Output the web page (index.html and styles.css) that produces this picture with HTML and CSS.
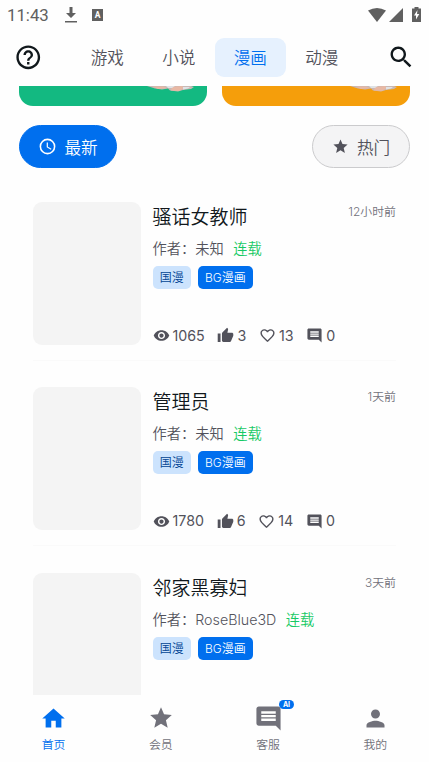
FILE: index.html
```html
<!DOCTYPE html>
<html lang="zh-CN">
<head>
<meta charset="utf-8">
<title>漫画</title>
<link rel="stylesheet" href="styles.css">
</head>
<body>
<svg class="defs" width="0" height="0">
  <symbol id="eye" viewBox="0 0 24 24"><path d="M12 4.5C7 4.5 2.73 7.61 1 12c1.73 4.39 6 7.5 11 7.5s9.270-3.110 11-7.500c-1.730-4.390-6-7.500-11-7.500zM12 17c-2.760 0-5-2.240-5-5s2.240-5 5-5 5 2.240 5 5-2.240 5-5 5zm0-8c-1.660 0-3 1.340-3 3s1.340 3 3 3 3-1.340 3-3-1.340-3-3-3z"/></symbol>
  <symbol id="thumb" viewBox="0 0 24 24"><path d="M1 21h4V9H1v12zm22-11c0-1.100-.9-2-2-2h-6.310l.95-4.570.03-.32c0-.41-.17-.79-.44-1.060L14.170 1 7.590 7.590C7.220 7.950 7 8.450 7 9v10c0 1.100.9 2 2 2h9c.83 0 1.540-.5 1.840-1.220l3.020-7.050c.09-.23.14-.47.14-.73v-2z"/></symbol>
  <symbol id="heart" viewBox="0 0 24 24"><path d="M16.500 3c-1.740 0-3.410.81-4.500 2.090C10.910 3.810 9.240 3 7.500 3 4.420 3 2 5.420 2 8.500c0 3.780 3.400 6.860 8.550 11.540L12 21.350l1.450-1.320C18.600 15.360 22 12.280 22 8.500 22 5.420 19.580 3 16.500 3zm-4.400 15.550l-.1.100-.1-.1C7.140 14.240 4 11.390 4 8.500 4 6.500 5.500 5 7.500 5c1.540 0 3.040.99 3.570 2.360h1.870C13.460 5.990 14.960 5 16.500 5c2 0 3.500 1.500 3.500 3.500 0 2.890-3.140 5.740-7.900 10.050z"/></symbol>
  <symbol id="comment" viewBox="0 0 24 24"><path d="M21.990 4c0-1.100-.89-2-1.990-2H4c-1.100 0-2 .9-2 2v12c0 1.100.9 2 2 2h14l4 4-.01-18zM18 14H6v-2h12v2zm0-3H6V9h12v2zm0-3H6V6h12v2z"/></symbol>
  <symbol id="star" viewBox="0 0 24 24"><path d="M12 17.270L18.180 21l-1.640-7.030L22 9.240l-7.190-.61L12 2 9.190 8.630 2 9.240l5.460 4.730L5.820 21z"/></symbol>
  <symbol id="art" viewBox="0 0 48 7"><path d="M0 0h44l3 1-3 2-8 1-5 1.500-8-1-2-2-6 1-7-1z" fill="#c9b8b4"/><path d="M6 .5l10 0 4 1.500-9 1zM25 1l10-1 2 2-5 3-8-.5z" fill="#e8b8a4"/><path d="M19 0h9l-3 2-4 0zM36 1h7l-2 1.500-5 1z" fill="#e0e3e6"/></symbol>
</svg>
<div class="app">
  <div class="status">
    <span class="clock">11:43</span>
    <svg class="download" viewBox="0 0 12 16"><path d="M4.500 0h3v6h3.500L6 11 1 6h3.500zM0 14h12v1.500H0z"/></svg>
    <span class="badge-a">A</span>
    <span class="system">
      <svg width="18" height="14" viewBox="0 0 18 14"><path d="M0 2.500Q9-2.500 18 2.500L9 14z"/></svg>
      <svg width="14" height="14" viewBox="0 0 14 14"><path d="M14 0v14H0z"/></svg>
      <svg class="battery" width="9" height="15" viewBox="0 0 9 15"><path d="M2.500 0h4v1.500H9V15H0V1.500h2.500z"/><path d="M5.500 3L2 8.500h2v4L7.300 7H5z" fill="#fff"/></svg>
    </span>
  </div>
  <header class="topbar">
    <svg class="top-icon" viewBox="0 0 24 24"><path d="M11 18h2v-2h-2v2zm1-16C6.480 2 2 6.480 2 12s4.480 10 10 10 10-4.480 10-10S17.520 2 12 2zm0 18c-4.410 0-8-3.590-8-8s3.590-8 8-8 8 3.590 8 8-3.590 8-8 8zm0-14c-2.210 0-4 1.790-4 4h2c0-1.100.9-2 2-2s2 .9 2 2c0 2-3 1.750-3 5h2c0-2.250 3-2.500 3-5 0-2.210-1.790-4-4-4z"/></svg>
    <nav class="tabs"><a>游戏</a><a>小说</a><a class="active">漫画</a><a>动漫</a></nav>
    <svg class="top-icon" viewBox="0 0 24 24"><path d="M15.500 14h-.79l-.28-.27C15.410 12.590 16 11.110 16 9.500 16 5.910 13.090 3 9.500 3S3 5.910 3 9.500 5.910 16 9.500 16c1.610 0 3.090-.59 4.230-1.570l.27.28v.79l5 4.990L20.490 19l-4.990-5zm-6 0C7.010 14 5 11.990 5 9.500S7.010 5 9.500 5 14 7.010 14 9.500 11.990 14 9.500 14z"/></svg>
  </header>
  <main class="content">
    <div class="banners">
      <div class="banner green"><svg><use href="#art"/></svg></div>
      <div class="banner orange"><svg><use href="#art"/></svg></div>
    </div>
    <div class="filters">
      <button class="pill primary"><svg viewBox="0 0 24 24"><path d="M12 2a10 10 0 1 0 0 20 10 10 0 0 0 0-20zm0 18a8 8 0 1 1 0-16 8 8 0 0 1 0 16zm.5-13H11v6l5.250 3.150.75-1.230-4.500-2.670z"/></svg>最新</button>
      <button class="pill"><svg viewBox="0 0 24 24"><use href="#star"/></svg>热门</button>
    </div>
    <section class="list">
      <article class="item">
        <div class="cover"></div>
        <div class="info">
          <div class="head"><h2>骚话女教师</h2><time>12小时前</time></div>
          <p class="author">作者：未知<span>连载</span></p>
          <div class="tags"><span>国漫</span><span class="solid">BG漫画</span></div>
          <div class="stats"><span><svg><use href="#eye"/></svg>1065</span><span><svg><use href="#thumb"/></svg>3</span><span><svg><use href="#heart"/></svg>13</span><span><svg><use href="#comment"/></svg>0</span></div>
        </div>
      </article>
      <article class="item">
        <div class="cover"></div>
        <div class="info">
          <div class="head"><h2>管理员</h2><time>1天前</time></div>
          <p class="author">作者：未知<span>连载</span></p>
          <div class="tags"><span>国漫</span><span class="solid">BG漫画</span></div>
          <div class="stats"><span><svg><use href="#eye"/></svg>1780</span><span><svg><use href="#thumb"/></svg>6</span><span><svg><use href="#heart"/></svg>14</span><span><svg><use href="#comment"/></svg>0</span></div>
        </div>
      </article>
      <article class="item">
        <div class="cover"></div>
        <div class="info">
          <div class="head"><h2>邻家黑寡妇</h2><time>3天前</time></div>
          <p class="author">作者：RoseBlue3D<span>连载</span></p>
          <div class="tags"><span>国漫</span><span class="solid">BG漫画</span></div>
        </div>
      </article>
    </section>
  </main>
  <nav class="bottom">
    <a class="active"><svg class="home" viewBox="0 0 24 24"><path d="M10 20v-6h4v6h5v-8h3L12 3 2 12h3v8z"/></svg>首页</a>
    <a><svg viewBox="0 0 24 24"><use href="#star"/></svg>会员</a>
    <a><svg class="chat" viewBox="0 0 24 24"><use href="#comment"/></svg>客服<span class="ai">AI</span></a>
    <a><svg class="person" viewBox="0 0 24 24"><path d="M12 12c2.210 0 4-1.790 4-4s-1.790-4-4-4-4 1.790-4 4 1.790 4 4 4zm0 2c-2.670 0-8 1.340-8 4v2h16v-2c0-2.660-5.330-4-8-4z"/></svg>我的</a>
  </nav>
</div>
</body>
</html>
```
FILE: styles.css
```css
* { box-sizing: border-box; }
body {
  margin: 0;
  background: #fefefe;
  font-family: Inter, "Noto Sans CJK SC", sans-serif;
  font-weight: 350;
  color: #11181c;
}
svg { display: block; fill: currentColor; flex: none; }
.defs { position: absolute; }
.app { width: 429px; height: 762px; display: flex; flex-direction: column; overflow: hidden; }

.status {
  height: 29px; flex: none; display: flex; align-items: center;
  padding: 0 8px 0 7px; color: #606060;
}
.clock { font: 400 16.800px/29px Roboto, sans-serif; width: 58px; padding-top: 1px; }
.download { width: 12px; height: 16px; }
.badge-a {
  margin-left: 15px; width: 11px; height: 12px; background: #606060; color: #fff;
  font: 700 8.500px/12px Roboto, sans-serif; text-align: center;
}
.system { margin-left: auto; display: flex; align-items: center; gap: 3px; }
.battery { margin-left: 6px; }

.topbar {
  height: 57px; flex: none; display: flex; align-items: center;
  justify-content: space-between; padding: 0 14px;
}
.top-icon { width: 28.500px; height: 28.500px; }
.tabs { display: flex; }
.tabs a {
  width: 71.500px; height: 39px; border-radius: 9px; text-align: center;
  font-size: 16.600px; line-height: 41px; color: #52525b;
}
.tabs .active { background: #e6f1fe; color: #006fee; }

.content { flex: 1; min-height: 0; overflow: hidden; }
.banners { display: flex; gap: 15px; padding: 0 19px; }
.banner { flex: 1; height: 20px; border-radius: 0 0 14px 14px; display: flex; justify-content: flex-end; padding-right: 12px; }
.banner svg { width: 48px; height: 7px; }
.green { background: #13b981; }
.orange { background: #f59e0b; }
.filters { display: flex; justify-content: space-between; padding: 19px 19px 0; }
.pill {
  display: flex; align-items: center; justify-content: center; gap: 7px;
  width: 98px; height: 43px; padding: 0; border: 1px solid #cbcbcd; border-radius: 22px;
  background: #f4f4f5; color: #52525b; font: 350 16.600px "Noto Sans CJK SC", sans-serif;
}
.pill svg { width: 19px; height: 19px; }
.pill:not(.primary) svg { width: 17px; height: 17px; margin-right: 1px; }
.primary { background: #006fee; border-color: #006fee; color: #fff; }

.list { padding: 6px 33px 0; }
.item { display: flex; gap: 11.500px; height: 185.700px; padding-top: 27.500px; }
.item + .item { border-top: 1px solid #fafafa; padding-top: 26.500px; }
.cover { width: 108px; height: 143px; border-radius: 9px; background: #f4f4f4; flex: none; }
.info { flex: 1; height: 143px; display: flex; flex-direction: column; }
.head { display: flex; justify-content: space-between; }
h2 { margin: 0; font-size: 19px; line-height: 31px; font-weight: 350; }
time { font-size: 11.900px; line-height: 19px; color: #71717a; }
.author { margin: 5px 0 0; font-size: 14.250px; line-height: 21px; color: #52525b; }
.author span { margin-left: 9.500px; color: #17c964; }
.tags { display: flex; gap: 7px; margin-top: 7px; }
.tags span {
  height: 23px; padding: 0 7.200px; border-radius: 5px; background: #cce3fd; color: #004493;
  font-size: 12px; line-height: 23px;
}
.tags .solid { background: #006fee; color: #fff; }
.stats { display: flex; gap: 12.700px; margin-top: auto; font-size: 14.250px; line-height: 18px; font-weight: 400; color: #52525b; }
.stats span { display: flex; align-items: center; gap: 3px; }
.stats svg { width: 17px; height: 17px; }

.bottom { height: 67px; flex: none; display: flex; color: #71717a; }
.bottom a {
  position: relative; flex: 1; display: flex; flex-direction: column; align-items: center;
  padding-top: 10px; font-size: 11.900px; line-height: 17px;
}
.bottom svg { width: 26px; height: 26px; margin-bottom: 5px; }
.bottom .home, .bottom .person { width: 27px; height: 27px; margin: 0 0 4px; }
.bottom .chat { width: 29px; height: 29px; margin: -1px 0 3px; }
.bottom .active { color: #006fee; }
.ai {
  position: absolute; top: 5px; left: 64.500px; width: 15px; height: 9px; border-radius: 5px;
  background: #006fee; color: #fff; font-size: 7px; font-weight: 700; line-height: 9px; text-align: center;
}
```
